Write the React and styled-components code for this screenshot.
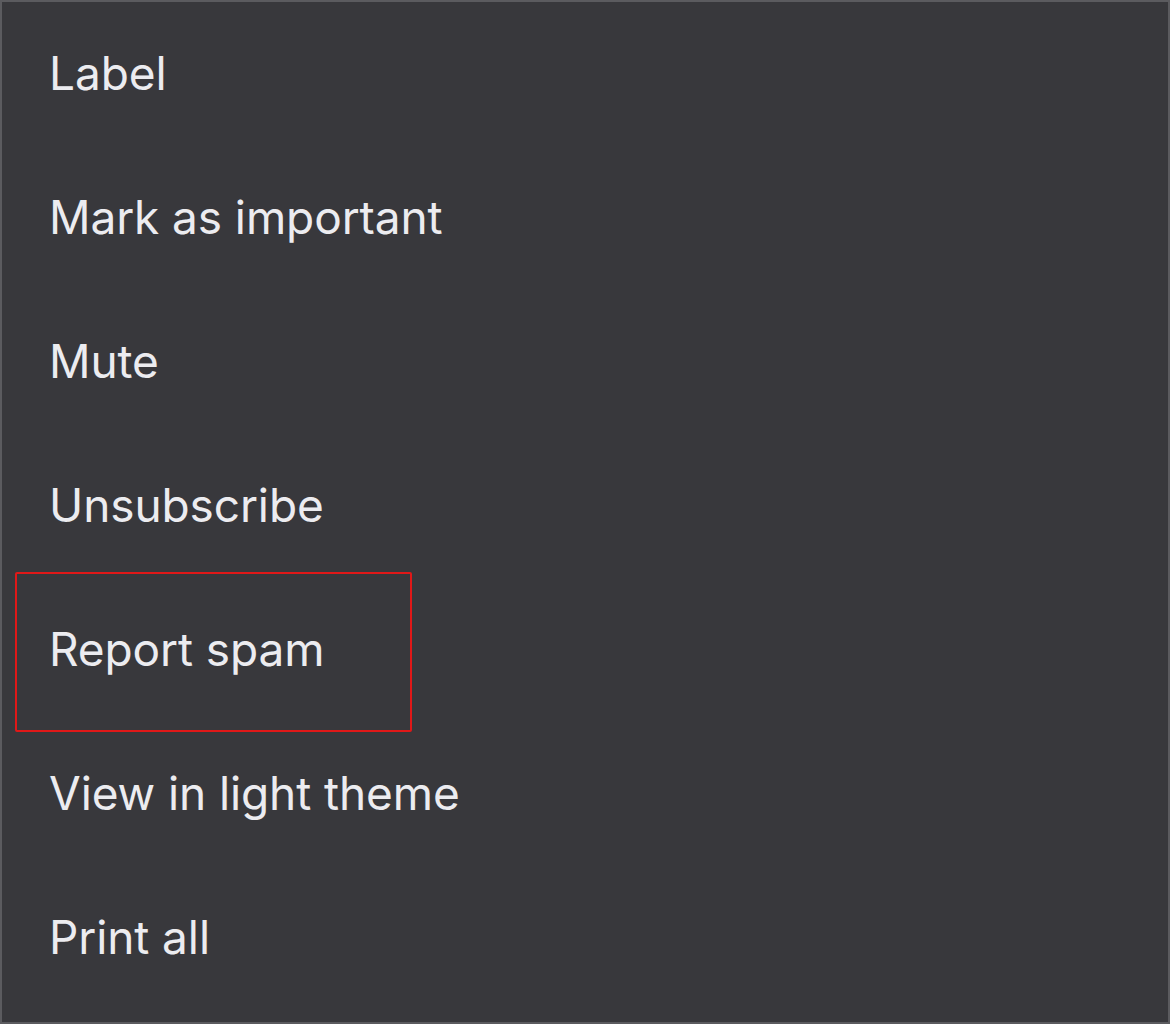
import React from "react";
import styled, { createGlobalStyle } from "styled-components";

const GlobalStyle = createGlobalStyle`
  html, body {
    margin: 0;
    padding: 0;
    background: #38383c;
  }
  * {
    box-sizing: border-box;
  }
`;

const Frame = styled.div`
  width: 1170px;
  height: 1024px;
  border: 2px solid #5b5b5f;
  background: #38383c;
  display: flex;
  flex-direction: column;
  overflow: hidden;
`;

const Row = styled.div`
  position: relative;
  height: 144px;
  flex-shrink: 0;
  display: flex;
  align-items: center;
  padding-left: 47px;
  padding-bottom: 2px;
  font-family: Inter, "Liberation Sans", sans-serif;
  font-size: 46px;
  letter-spacing: -0.1px;
  color: #ececf0;
`;

const Highlight = styled.div`
  position: absolute;
  left: 13px;
  top: -6px;
  width: 397px;
  height: 160px;
  border: 2px solid #e01818;
  border-radius: 2px;
  pointer-events: none;
`;

const items = [
  "Label",
  "Mark as important",
  "Mute",
  "Unsubscribe",
  "Report spam",
  "View in light theme",
  "Print all"
];

const App = () => {
  return (
    <>
      <GlobalStyle />
      <Frame>
        {items.map(item => (
          <Row key={item}>
            {item === "Report spam" && <Highlight />}
            {item}
          </Row>
        ))}
      </Frame>
    </>
  );
};

export default App;
